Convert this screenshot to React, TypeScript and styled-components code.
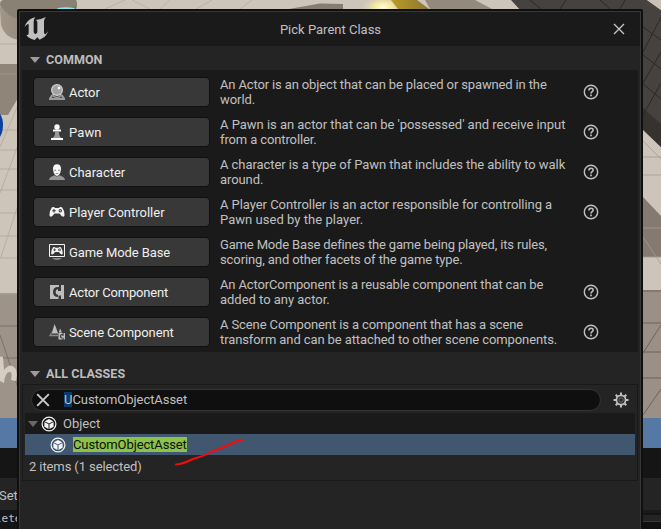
import React from "react";
import styled, { createGlobalStyle } from "styled-components";

const GlobalStyle = createGlobalStyle`
  * { box-sizing: border-box; }
  html, body { margin: 0; padding: 0; overflow: hidden; background: #151515; }
`;

const Screen = styled.main`
  position: relative;
  width: 661px;
  height: 529px;
  overflow: hidden;
  font-family: Roboto, "Liberation Sans", sans-serif;
  font-size: 13px;
  color: #c0c0c0;
`;

const Viewport = styled.svg`
  position: absolute;
  inset: 0;
  display: block;
`;

const EditorText = styled.span<{ $top: number; $mono?: boolean }>`
  position: absolute;
  left: ${(p) => (p.$mono ? -5 : -1)}px;
  top: ${(p) => p.$top}px;
  font-family: ${(p) => (p.$mono ? '"DejaVu Sans Mono", monospace' : "Roboto, sans-serif")};
  font-size: ${(p) => (p.$mono ? 11 : 13)}px;
  line-height: 16px;
`;

const Dialog = styled.section`
  position: absolute;
  left: 17px;
  top: 9px;
  width: 626px;
  height: 530px;
  border: 2px solid #0f0f0f;
  border-radius: 2px 2px 0 0;
  background: #242424;
`;

const DialogInner = styled.div`
  height: 100%;
  border: 1px solid #383838;
  display: flex;
  flex-direction: column;
`;

const TitleBar = styled.header`
  height: 34px;
  flex: none;
  background: #1a1a1a;
  display: grid;
  grid-template-columns: 34px 1fr 27px;
  align-items: center;
`;

const Title = styled.h1`
  margin: 0;
  padding: 1px 6px 0 0;
  font-size: 13px;
  font-weight: 400;
  line-height: 16px;
  text-align: center;
  color: #c0c0c0;
`;

const Icon = styled.svg`
  display: block;
  flex: none;
`;

const SectionHeader = styled.h2<{ $height: number; $top: number }>`
  margin: 0;
  height: ${(p) => p.$height}px;
  flex: none;
  display: flex;
  align-items: center;
  gap: 6px;
  padding: ${(p) => p.$top}px 0 0 10px;
  font-size: 12.5px;
  font-weight: 700;
  line-height: 16px;
  letter-spacing: 0.05px;
  color: #bdbdbd;
`;

const CommonPanel = styled.div`
  margin: 0 2px;
  height: 282px;
  flex: none;
  padding-top: 2px;
  background: #1a1a1a;
`;

const ClassRow = styled.div`
  height: 40px;
  display: grid;
  grid-template-columns: 177px 353px 32px;
  column-gap: 10px;
  align-items: center;
  padding-left: 11px;
`;

const ClassButton = styled.button`
  height: 30px;
  display: flex;
  align-items: center;
  gap: 4px;
  padding: 0 0 0 15px;
  border: 1px solid #101010;
  border-radius: 4px;
  background: #383838;
  font: 13px/16px Roboto, sans-serif;
  color: #efefef;
`;

const ClassName = styled.span<{ $ls: number }>`
  padding-top: 2px;
  letter-spacing: ${(p) => p.$ls}px;
  white-space: nowrap;
`;

const Description = styled.p`
  margin: 0;
  line-height: 15px;
  display: flex;
  flex-direction: column;
`;

const Line = styled.span<{ $ls: number }>`
  letter-spacing: ${(p) => p.$ls}px;
  white-space: nowrap;
`;

const AllClasses = styled.div`
  margin: 0 2px;
  height: 97px;
  flex: none;
  border: 1px solid #191919;
  padding: 3px 2px 0;
`;

const SearchRow = styled.div`
  display: flex;
  align-items: center;
  height: 25px;
  padding: 0 0 1px 6px;
  gap: 12px;
`;

const SearchBox = styled.div`
  width: 570px;
  height: 22px;
  display: flex;
  align-items: center;
  border: 1px solid #343434;
  border-radius: 11px;
  background: #0f0f0f;
  padding-left: 4px;
  gap: 14px;
  line-height: 15px;
`;

const Query = styled.span`
  letter-spacing: -0.05px;
  margin-top: -1px;
`;

const Selected = styled.span`
  background: #083b70;
`;

const TreeRow = styled.div<{ $selected?: boolean }>`
  height: 21px;
  display: flex;
  align-items: center;
  gap: ${(p) => (p.$selected ? 7 : 3)}px;
  background: ${(p) => (p.$selected ? "#40576f" : "#1a1a1a")};
  padding-left: ${(p) => (p.$selected ? 25 : 3)}px;
  line-height: 15px;
`;

const TreeLabel = styled.span`
  margin-left: 3px;
`;

const Match = styled.mark`
  background: #8bc24a;
  color: #0f0f0f;
  line-height: 15px;
  letter-spacing: -0.11px;
`;

const Status = styled.div`
  padding: 4px 0 0 4px;
  line-height: 16px;
  letter-spacing: -0.1px;
`;

const Stroke = styled.svg`
  position: absolute;
  left: 170px;
  top: 432px;
`;

const Scene = () => (
  <Viewport width="661" height="529" viewBox="0 0 661 529">
    <defs>
      <radialGradient id="glow">
        <stop offset="0" stopColor="#fffbe0" />
        <stop offset=".4" stopColor="#f5e9a0" />
        <stop offset="1" stopColor="#d9d0b8" stopOpacity="0" />
      </radialGradient>
      <linearGradient id="pillar" x1="0" x2="1">
        <stop offset="0" stopColor="#a09587" />
        <stop offset="1" stopColor="#7d7468" />
      </linearGradient>
      <linearGradient id="gold" x1="0" x2="1">
        <stop offset="0" stopColor="#b99b25" />
        <stop offset="1" stopColor="#8b7634" />
      </linearGradient>
    </defs>
    <rect width="661" height="448" fill="#cdc4ba" />
    {/* left floor */}
    <path d="M0 64H18V98L8 115H0Z" fill="#8f8579" />
    <path d="M0 295H18V419H0Z" fill="#9d9388" />
    <g stroke="#a99f94" strokeWidth=".6" fill="none">
      <path d="M0 44H18M0 74H18M0 130H18M0 150H18M0 169H18M0 190H18M0 213H18M0 236H18M0 258H18M18 105L0 147M18 145L0 193M18 205L1 257" />
    </g>
    <path d="M0 294H18M0 326H18M0 358H18M0 335L18 388" stroke="#7a7168" strokeWidth="1" fill="none" />
    <path d="M-2 356L3 357L4 370Q10 362 15 368Q18 371 16 381L11 380Q13 371 9 372Q5 373 4 383L-2 380Z" fill="#d6cdc2" />
    <path d="M0 114Q3 118 3 125Q3 132 0 137Z" fill="#0c3fa4" />
    {/* top strip */}
    <path d="M105 9L125 0M132 0L150 9M170 0L160 9M196 9L212 0M240 9L252 0" stroke="#b3aaa0" strokeWidth=".7" />
    <path d="M0 9Q0 0 12 0H76Q78 5 76 9H18V40Q4 37 1 25Z" fill="url(#pillar)" />
    <path d="M0 5Q8 17 18 19V0H4Q0 0 0 5Z" fill="#8a8175" />
    <path d="M18 0H76L77 5L70 9H18Z" fill="#8a8175" />
    <ellipse cx="66" cy="9" rx="9" ry="1.8" fill="#8ce8f4" />
    <path d="M289 9L320 3.5L343 4V9Z" fill="#867c70" />
    <path d="M425 0H475L492 9H430Z" fill="#93897c" />
    <ellipse cx="383" cy="7" rx="22" ry="12" fill="url(#glow)" />
    <path d="M391 0H417L429 9H398Z" fill="url(#gold)" />
    {/* dark wall */}
    <path d="M511 0H647L661 10V147L643 129V30L522 12Z" fill="#46423f" />
    <path d="M647 0H661V10Z" fill="#c9c0b6" />
    <path d="M643 108L661 124V147L643 130Z" fill="#36332f" />
    <path d="M530 0L541 9M560 9L566 0M600 0L610 9M620 9L625 0M643 27L661 40M643 55L661 69M643 84L661 99M661 17L643 52M661 52L643 83M661 83L643 115" stroke="#2b2927" strokeWidth="1" fill="none" />
    {/* right floor */}
    <path d="M643 197L661 216V257H643Z" fill="#847a6f" />
    <path d="M643 290H661V418H643Z" fill="#9b9085" />
    <path d="M643 141L661 159M643 157H661M643 175H661M643 228H661M643 237L661 264M643 257H661" stroke="#a79d92" strokeWidth=".8" fill="none" />
    <path d="M643 291H661M643 323H661M643 352H661M643 378H661M643 353L661 325M643 415L661 389" stroke="#6c635b" strokeWidth="1" fill="none" />
    {/* status strip and editor panels */}
    <rect y="418" width="661" height="30" fill="#5678a4" />
    <rect y="448" width="661" height="81" fill="#151515" />
    <rect y="478" width="661" height="32" fill="#242424" />
    <rect x="643" y="510" width="18" height="3" fill="#1a1a1a" />
    <rect x="643" y="515" width="18" height="6" fill="#242424" />
    <path d="M643 521.5H661" stroke="#383838" />
    <rect x="643" y="522" width="18" height="7" fill="#0f0f0f" />
  </Viewport>
);

const EngineLogo = () => (
  <Icon width="34" height="34" viewBox="20 12 34 34">
    <path
      transform="scale(.33333)"
      fill="#c0c0c0"
      d="M74 81C79 65 90 55 106 52Q101 57 101 65V96Q102 102 107 102Q111 101 112 97V66Q112 62 107 60C118 58 127 56 138 51Q132 57 132 64V96Q132 103 136 103Q140 100 144 94C140 108 130 115 119 119L112 112L104 120C94 118 85 114 79 106Q86 106 86 99V75Q86 71 82 73Q79 75 74 81Z"
    />
  </Icon>
);

const Arrow = ({ dim }: { dim?: boolean }) => (
  <Icon width="10" height="6" viewBox="0 0 10 6">
    <path d="M0 0H10L5 6Z" fill={dim ? "#696969" : "#9c9c9c"} />
  </Icon>
);

const Cross = ({ size, weight }: { size: number; weight: number }) => (
  <Icon width={size} height={size} viewBox="0 0 12 12">
    <path d="M1 1L11 11M11 1L1 11" stroke="#c8c8c8" strokeWidth={weight} fill="none" />
  </Icon>
);

const Help = () => (
  <Icon width="16" height="16" viewBox="0 0 16 16" fill="none" stroke="#c0c0c0">
    <circle cx="8" cy="8" r="6.7" strokeWidth="1.4" />
    <path d="M5.9 6.5C5.9 3.4 10.3 3.6 10.1 6.2C10 7.7 8 7.7 8 9.6" strokeWidth="1.6" />
    <path d="M8 10.6V12.2" strokeWidth="1.7" />
  </Icon>
);

const ObjectIcon = () => (
  <Icon width="16" height="16" viewBox="0 0 16 16">
    <circle cx="8" cy="8" r="6.9" fill="none" stroke="#f4f4f4" strokeWidth="1.2" />
    <path d="M8 3L12.3 5.2L8 7.5L3.7 5.2ZM3.4 6L7.5 8.2V13L3.4 10.7ZM12.6 6L8.5 8.2V13L12.6 10.7Z" fill="#f4f4f4" />
  </Icon>
);

const Gear = () => (
  <Icon width="16" height="16" viewBox="0 0 16 16" fill="none" stroke="#c0c0c0">
    <path d="M8 .5V3M8 13V15.5M.5 8H3M13 8H15.5M2.7 2.7L4.5 4.5M11.5 11.5L13.3 13.3M13.3 2.7L11.5 4.5M4.5 11.5L2.7 13.3" strokeWidth="2" />
    <circle cx="8" cy="8" r="4.6" strokeWidth="1.8" />
    <circle cx="8" cy="8" r="2.2" stroke="#777" strokeWidth="1" />
  </Icon>
);

const Gamepad = () => (
  <>
    <path
      fill="#f2f2f2"
      fillRule="evenodd"
      d="M3 3.2Q5 2.4 6.2 4H9.8Q11 2.4 13 3.2Q15.8 7 15.6 11Q15 13.8 12.4 11.8L10.5 9.6H5.5L3.6 11.8Q1 13.8.4 11Q.2 7 3 3.2ZM4.4 4.9V6.2H3.1V7.3H4.4V8.6H5.5V7.3H6.8V6.2H5.5V4.9ZM11.3 5A1.7 1.7 0 1 0 11.3 8.4A1.7 1.7 0 1 0 11.3 5Z"
    />
    <circle cx="11.3" cy="6.7" r=".7" fill="#e0e0e0" />
  </>
);

const Letter = () => (
  <path
    fill="#bdbdbd"
    fillRule="evenodd"
    d="M1 1H15V15H12V11.4H9.5V15H1ZM9 3Q4 3 4 8Q4 13 9 13V10.8Q6.7 10.8 6.7 8Q6.7 5.3 9 5.3V7H12V1H10V3Z"
  />
);

type Kind = "actor" | "pawn" | "character" | "controller" | "mode" | "component" | "scene";

const glyphs: Record<Kind, React.ReactNode> = {
  actor: (
    <>
      <path d="M2.5 10.5H4Q8 15 12 10.5H13.5L16 14.2V16H0V14.2ZM2.6 13.8H13.4L12.4 12.4Q8 15 3.6 12.4Z" fill="#9c9c9c" fillRule="evenodd" />
      <circle cx="8" cy="6" r="6" fill="#d6d6d6" />
      <circle cx="8" cy="6" r="4.8" fill="#a2a2a2" />
      <circle cx="10" cy="4.1" r="1.3" fill="#fff" />
    </>
  ),
  pawn: (
    <>
      <circle cx="8" cy="3" r="2.7" fill="#fff" />
      <path d="M4 5.6H12V7.5H4ZM2 14H14V16H2Z" fill="#fff" />
      <path d="M6 8H10Q9.7 12 12.5 14H3.5Q6.3 12 6 8Z" fill="#989898" />
    </>
  ),
  character: (
    <>
      <path d="M0 16Q.3 13.2 3.5 12.2L5.4 11.3Q8 13.5 10.6 11.3L12.5 12.2Q15.7 13.2 16 16Z" fill="#969696" />
      <path d="M8 .2Q12.2.2 12 5.5L11.3 8.8Q10 12 8 12Q6 12 4.7 8.8L4 5.5Q3.8.2 8 .2Z" fill="#f7f7f7" />
      <path d="M5.3 5.7H7V6.7H5.3ZM9 5.7H10.7V6.7H9ZM6.7 9.3H9.3V10H6.7Z" fill="#777" />
    </>
  ),
  controller: <Gamepad />,
  mode: (
    <>
      <path d="M.5.5H15.5V12.5H.5Z" fill="none" stroke="#f2f2f2" />
      <g transform="translate(1.8 .7) scale(.77)">
        <Gamepad />
      </g>
      <path d="M3 14.3H13Q10 16 8 15.8Q6 16 3 14.3Z" fill="#a0a0a0" />
    </>
  ),
  component: <Letter />,
  scene: (
    <>
      <path d="M5.6 0L9.2 9.5H2.6ZM11 4.5L13 8.5H9.8Z" fill="#bdbdbd" />
      <path d="M2.7 7L0 12.3H9V10.8H2.2Z" fill="#8a8a8a" />
      <g transform="translate(9 8.5) scale(.47)">
        <Letter />
      </g>
    </>
  ),
};

interface ClassInfo {
  kind: Kind;
  name: string;
  nameSpacing: number;
  lines: [string, number][];
  help: boolean;
}

const classes: ClassInfo[] = [
  {
    kind: "actor", name: "Actor", nameSpacing: -0.1, help: true,
    lines: [["An Actor is an object that can be placed or spawned in the", -0.14], ["world.", -0.05]],
  },
  {
    kind: "pawn", name: "Pawn", nameSpacing: 0.1, help: true,
    lines: [["A Pawn is an actor that can be 'possessed' and receive input", -0.025], ["from a controller.", -0.12]],
  },
  {
    kind: "character", name: "Character", nameSpacing: 0, help: true,
    lines: [["A character is a type of Pawn that includes the ability to walk", -0.065], ["around.", -0.08]],
  },
  {
    kind: "controller", name: "Player Controller", nameSpacing: 0, help: true,
    lines: [["A Player Controller is an actor responsible for controlling a", -0.055], ["Pawn used by the player.", 0.04]],
  },
  {
    kind: "mode", name: "Game Mode Base", nameSpacing: -0.1, help: false,
    lines: [["Game Mode Base defines the game being played, its rules,", -0.16], ["scoring, and other facets of the game type.", -0.1]],
  },
  {
    kind: "component", name: "Actor Component", nameSpacing: -0.2, help: true,
    lines: [["An ActorComponent is a reusable component that can be", -0.135], ["added to any actor.", -0.02]],
  },
  {
    kind: "scene", name: "Scene Component", nameSpacing: -0.1, help: true,
    lines: [["A Scene Component is a component that has a scene", -0.11], ["transform and can be attached to other scene components.", -0.1]],
  },
];

export default function App() {
  return (
    <Screen>
      <GlobalStyle />
      <Scene />
      <EditorText $top={488}>Set</EditorText>
      <EditorText $top={511} $mono>
        lete
      </EditorText>
      <Dialog>
        <DialogInner>
          <TitleBar>
            <EngineLogo />
            <Title>Pick Parent Class</Title>
            <Cross size={12} weight={1.3} />
          </TitleBar>
          <SectionHeader $height={24} $top={4}>
            <Arrow />
            COMMON
          </SectionHeader>
          <CommonPanel>
            {classes.map((c) => (
              <ClassRow key={c.kind}>
                <ClassButton>
                  <Icon width="16" height="16" viewBox="0 0 16 16">
                    {glyphs[c.kind]}
                  </Icon>
                  <ClassName $ls={c.nameSpacing}>{c.name}</ClassName>
                </ClassButton>
                <Description>
                  {c.lines.map(([text, spacing]) => (
                    <Line key={text} $ls={spacing}>
                      {text}
                    </Line>
                  ))}
                </Description>
                {c.help && <Help />}
              </ClassRow>
            ))}
          </CommonPanel>
          <SectionHeader $height={32} $top={11}>
            <Arrow />
            ALL CLASSES
          </SectionHeader>
          <AllClasses>
            <SearchRow>
              <SearchBox>
                <Cross size={14} weight={1.7} />
                <Query>
                  <Selected>U</Selected>CustomObjectAsset
                </Query>
              </SearchBox>
              <Gear />
            </SearchRow>
            <TreeRow>
              <Arrow dim />
              <ObjectIcon />
              <TreeLabel>Object</TreeLabel>
            </TreeRow>
            <TreeRow $selected>
              <ObjectIcon />
              <Match>CustomObjectAsset</Match>
            </TreeRow>
            <Status>2 items (1 selected)</Status>
          </AllClasses>
        </DialogInner>
      </Dialog>
      <Stroke width="80" height="38" viewBox="170 432 80 38">
        <path d="M176 464.5Q183 464 193 459Q202 457 211 452Q229 445 237 441L242 440.5" fill="none" stroke="#f40b12" strokeWidth="2" strokeLinecap="round" strokeLinejoin="round" />
      </Stroke>
    </Screen>
  );
}
